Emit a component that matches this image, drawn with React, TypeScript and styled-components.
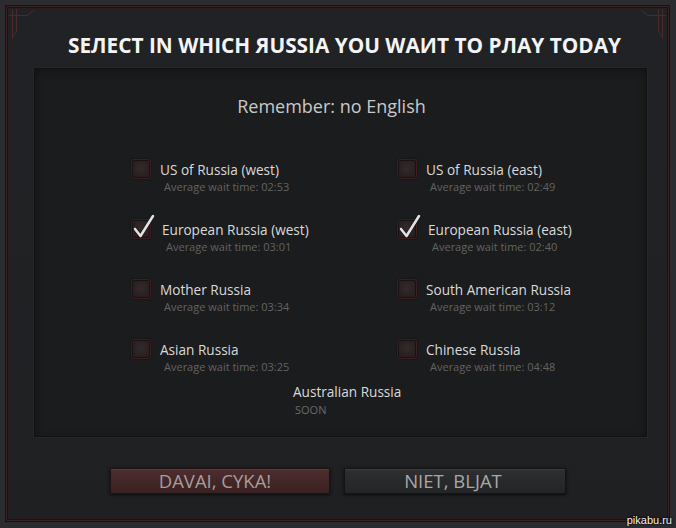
import React from "react";
import styled, { createGlobalStyle } from "styled-components";

const GlobalStyle = createGlobalStyle`
  html, body {
    margin: 0;
    padding: 0;
    background: #191a1c;
  }
  body {
    font-family: "Open Sans", "Liberation Sans", sans-serif;
  }
`;

interface Region {
  name: string;
  wait: string;
  checked?: boolean;
}

const regions: Region[] = [
  { name: "US of Russia (west)", wait: "02:53" },
  { name: "US of Russia (east)", wait: "02:49" },
  { name: "European Russia (west)", wait: "03:01", checked: true },
  { name: "European Russia (east)", wait: "02:40", checked: true },
  { name: "Mother Russia", wait: "03:34" },
  { name: "South American Russia", wait: "03:12" },
  { name: "Asian Russia", wait: "03:25" },
  { name: "Chinese Russia", wait: "04:48" },
];

const Screen = styled.div`
  position: relative;
  box-sizing: border-box;
  width: 676px;
  height: 528px;
  padding: 6px 7px 7px 6px;
  background: #2a2c2f;
  overflow: hidden;
`;

const Frame = styled.div`
  position: relative;
  box-sizing: border-box;
  height: 100%;
  display: flex;
  flex-direction: column;
  background: linear-gradient(180deg, #212225 0%, #1f2022 100%);
  border: 1px solid #3a2222;
  box-shadow: inset 0 0 0 1px #151516, 0 0 0 1px #141415;
`;

const Title = styled.h1`
  margin: 26px 0 0;
  padding-left: 14px;
  text-align: center;
  font-family: "Open Sans", "Liberation Sans", sans-serif;
  font-weight: 700;
  font-size: 20.8px;
  line-height: 24px;
  color: #f4f4f4;
  white-space: nowrap;
`;

const Inner = styled.section`
  box-sizing: border-box;
  margin: 10px 20px 0 26px;
  height: 371px;
  padding: 26px 0 0;
  background: #1b1c1e;
  border: 1px solid #3a1e1e;
  box-shadow: inset 0 0 0 1px #121213, inset 0 2px 10px rgba(0, 0, 0, 0.45);
`;

const Notice = styled.div`
  text-align: center;
  padding-right: 18px;
  font-size: 18px;
  line-height: 24px;
  color: #c9c9c9;
`;

const Grid = styled.div`
  display: grid;
  grid-template-columns: 266px 266px;
  row-gap: 26px;
  margin: 42px 0 0 97px;
`;

const Option = styled.div`
  display: flex;
  align-items: flex-start;
  gap: 9px;
`;

const Box = styled.div`
  position: relative;
  flex: none;
  box-sizing: border-box;
  width: 20px;
  height: 20px;
  margin-top: -1px;
  border: 1px solid #3e1f1f;
  border-radius: 3px;
  background: radial-gradient(circle at 50% 45%, #332b2b 0%, #271f20 70%, #1f1819 100%);
  box-shadow: inset 0 0 0 1px #1a1212, 0 0 2px rgba(0, 0, 0, 0.6);
`;

const Tick = styled.svg`
  position: absolute;
  left: 1px;
  top: -6px;
  overflow: visible;
`;

const Texts = styled.div<{ $nudge?: number }>`
  display: flex;
  flex-direction: column;
  padding-left: ${(p) => p.$nudge ?? 0}px;
`;

const Label = styled.span`
  font-family: "Open Sans", "Liberation Sans", sans-serif;
  font-size: 13.6px;
  line-height: 20px;
  color: #dadada;
  white-space: nowrap;
`;

const Wait = styled.span`
  margin-left: 4px;
  font-size: 11px;
  line-height: 14px;
  color: #636363;
  white-space: nowrap;
`;

const Soon = styled.div`
  display: flex;
  flex-direction: column;
  margin: 8px 0 0 259px;
`;

const SoonTag = styled.span`
  margin-left: 2px;
  font-size: 11px;
  line-height: 16px;
  color: #6a6a6a;
`;

const Actions = styled.div`
  display: flex;
  gap: 14px;
  margin: 30px 0 0 103px;
`;

const Button = styled.button<{ $accept?: boolean }>`
  box-sizing: border-box;
  height: 26px;
  width: ${(p) => (p.$accept ? 220 : 222)}px;
  padding: 0 ${(p) => (p.$accept ? 10 : 4)}px 0 0;
  font-family: "Open Sans", "Liberation Sans", sans-serif;
  font-size: 18.5px;
  line-height: 24px;
  color: ${(p) => (p.$accept ? "#a89c9c" : "#a8a8a8")};
  border: 1px solid ${(p) => (p.$accept ? "#1e1212" : "#141414")};
  background: ${(p) =>
    p.$accept
      ? "linear-gradient(180deg, #4e2e2e 0%, #422626 55%, #3a2121 100%)"
      : "linear-gradient(180deg, #2e2f31 0%, #28292b 55%, #232425 100%)"};
  box-shadow: inset 0 1px 0 rgba(255, 255, 255, 0.06), 0 1px 3px rgba(0, 0, 0, 0.7);
  cursor: pointer;
`;

const Ornament = styled.svg<{ $flip?: boolean }>`
  position: absolute;
  top: 2px;
  ${(p) => (p.$flip ? "right: 2px; transform: scaleX(-1);" : "left: 2px;")}
`;

const Watermark = styled.span`
  position: absolute;
  right: 4px;
  bottom: 2px;
  font-family: "Liberation Sans", Arial, sans-serif;
  font-size: 11px;
  color: #f2f2f2;
  text-shadow: 0 0 2px #000, 0 0 2px #000;
`;

function CornerOrnament({ flip }: { flip?: boolean }) {
  return (
    <Ornament $flip={flip} width="34" height="34" viewBox="0 0 34 34">
      <g fill="none" stroke="#4a2a2a" strokeWidth="1">
        <path d="M3.5 0 V30" />
        <path d="M7.5 0 V22 L4 28" />
        <path d="M0 6.5 H18 L25 1" />
      </g>
    </Ornament>
  );
}

function CheckBox({ checked }: { checked?: boolean }) {
  return (
    <Box>
      {checked && (
        <Tick width="22" height="24" viewBox="0 0 22 24">
          <path d="M2 15 L7.5 22 L20 2" fill="none" stroke="#000" strokeOpacity="0.5" strokeWidth="3.8" strokeLinecap="round" strokeLinejoin="round" />
          <path d="M2 15 L7.5 22 L20 2" fill="none" stroke="#e2e2e2" strokeWidth="2.6" strokeLinecap="round" strokeLinejoin="round" />
        </Tick>
      )}
    </Box>
  );
}

export default function App() {
  return (
    <>
      <GlobalStyle />
      <Screen>
        <Frame>
          <CornerOrnament />
          <CornerOrnament flip />
          <Title>SEЛECT IN WHICH ЯUSSIA YOU WAИT TO PЛAY TODAY</Title>
          <Inner>
            <Notice>Remember: no English</Notice>
            <Grid>
              {regions.map((r) => (
                <Option key={r.name}>
                  <CheckBox checked={r.checked} />
                  <Texts $nudge={r.checked ? 2 : 0}>
                    <Label>{r.name}</Label>
                    <Wait>Average wait time: {r.wait}</Wait>
                  </Texts>
                </Option>
              ))}
            </Grid>
            <Soon>
              <Label>Australian Russia</Label>
              <SoonTag>SOON</SoonTag>
            </Soon>
          </Inner>
          <Actions>
            <Button $accept>DAVAI, CYKA!</Button>
            <Button>NIET, BLJAT</Button>
          </Actions>
        </Frame>
        <Watermark>pikabu.ru</Watermark>
      </Screen>
    </>
  );
}
